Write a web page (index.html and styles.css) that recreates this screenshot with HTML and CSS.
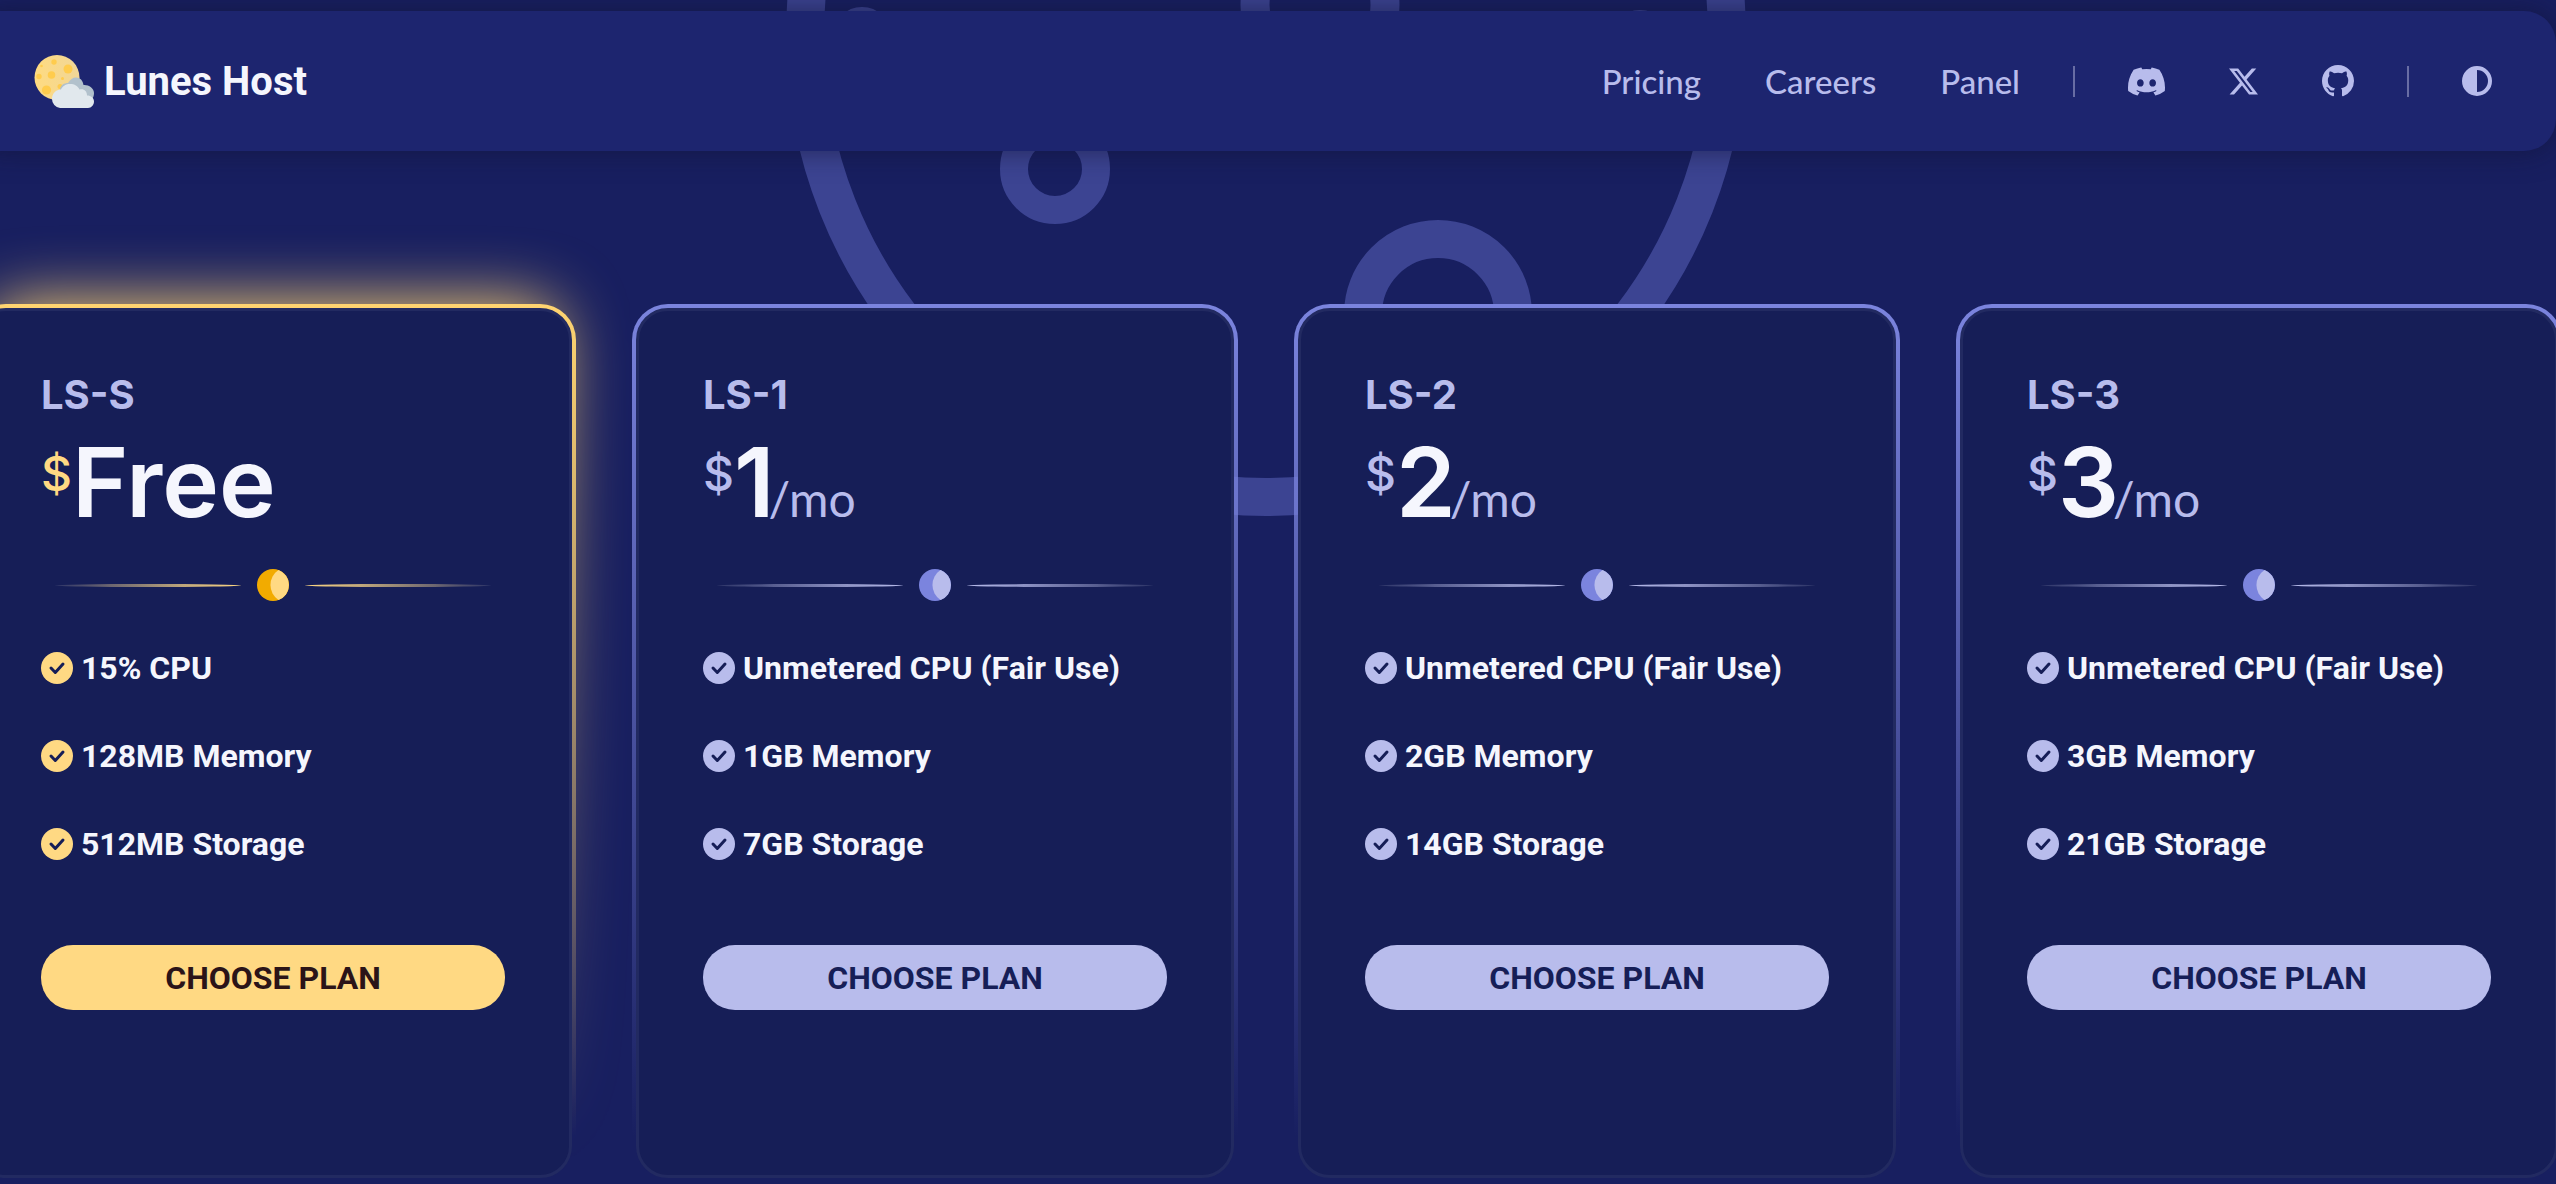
FILE: index.html
```html
<!DOCTYPE html>
<html lang="en">
	<head>
		<meta charset="UTF-8">
		<title>Lunes Host</title>
		<link rel="stylesheet" href="styles.css">
	</head>
	<body>
		<svg width="0" height="0" class="sprite">
			<symbol id="check" viewBox="0 0 32 32">
				<circle cx="16" cy="16" r="16"/>
				<path class="tick" d="M10 16l4.300 4.500L22 12"/>
			</symbol>
			<symbol id="moon" viewBox="0 0 32 32">
				<circle class="shade" cx="16" cy="16" r="16"/>
				<path d="M21.500 1A16 16 0 0 1 21.500 31A18 18 0 0 1 21.500 1"/>
			</symbol>
		</svg>
		<!-- big moon behind the cards -->
		<svg class="backdrop" width="960" height="517" viewBox="0 0 960 517">
			<circle cx="480" cy="36" r="461" stroke-width="38"/>
			<circle cx="269" cy="169" r="41" stroke-width="28"/>
			<circle cx="652" cy="314" r="75" stroke-width="38"/>
			<circle cx="534" cy="5" r="65" stroke-width="29"/>
			<circle cx="76" cy="36" r="20" stroke-width="18"/>
			<circle cx="854" cy="40" r="21" stroke-width="18"/>
		</svg>
		<header class="header">
			<a class="brand" href="#">
				<svg class="logo" width="60" height="53" viewBox="0 0 60 53">
					<defs>
						<linearGradient id="gold">
							<stop offset="0" stop-color="#ffdb80"/>
							<stop offset="1" stop-color="#f0d698"/>
						</linearGradient>
					</defs>
					<circle cx="23" cy="22.500" r="22.500" fill="url(#gold)"/>
					<g fill="#ffcc4d">
						<circle cx="20" cy="7" r="2.700"/>
						<circle cx="34" cy="14" r="4.500"/>
						<circle cx="17.500" cy="20" r="3.800"/>
						<circle cx="5" cy="21.500" r="2.700"/>
						<circle cx="7.500" cy="11" r="1.300"/>
						<circle cx="12.500" cy="35" r="4.600"/>
						<circle cx="28.500" cy="23.500" r="1.500"/>
						<circle cx="26" cy="31.500" r="2.500"/>
					</g>
					<path fill="#b2c1cc" d="M26 34c1-4 4-6 8-6 2-3.500 5-5.500 8-5.500 4 0 7 3 7.500 7.500 5-.5 10.500 3 10.500 8 0 3-1 4.500-2 6.500H30z"/>
					<path fill="#e1e8ed" d="M26 53a9 9 0 0 1-8-9c0-5.500 4-9.500 9-9.500 1.500-3.500 5-5.500 9-5.500 4.500 0 8 2 9.500 5.500 4.500-1 7.500 1.500 7.500 6 4 0 7 2.500 7 6s-2.500 6.500-6 6.500z"/>
				</svg>
				<span>Lunes Host</span>
			</a>
			<nav class="nav">
				<div class="links">
					<a href="#pricing">Pricing</a>
					<a href="#careers">Careers</a>
					<a href="#panel">Panel</a>
				</div>
				<span class="bar"></span>
				<div class="links">
					<a href="#" aria-label="Discord">
						<svg width="37" height="37" viewBox="0 0 16 16"><path d="M13.545 2.907a13.227 13.227 0 0 0-3.257-1.011.05.05 0 0 0-.052.025c-.141.25-.297.577-.406.833a12.19 12.19 0 0 0-3.658 0 8.258 8.258 0 0 0-.412-.833.051.051 0 0 0-.052-.025c-1.125.194-2.22.534-3.257 1.011a.041.041 0 0 0-.021.018C.356 6.024-.213 9.047.066 12.032c.001.014.01.028.021.037a13.276 13.276 0 0 0 3.995 2.02.05.05 0 0 0 .056-.019c.308-.42.582-.863.818-1.329a.05.05 0 0 0-.01-.059.051.051 0 0 0-.018-.011 8.875 8.875 0 0 1-1.248-.595.05.05 0 0 1-.02-.066.051.051 0 0 1 .015-.019c.084-.063.168-.129.248-.195a.05.05 0 0 1 .051-.007c2.619 1.196 5.454 1.196 8.041 0a.052.052 0 0 1 .053.007c.08.066.164.132.248.195a.051.051 0 0 1-.004.085 8.254 8.254 0 0 1-1.249.594.05.05 0 0 0-.03.03.052.052 0 0 0 .003.041c.24.465.515.909.817 1.329a.05.05 0 0 0 .056.019 13.235 13.235 0 0 0 4.001-2.02.049.049 0 0 0 .021-.037c.334-3.451-.559-6.449-2.366-9.106a.034.034 0 0 0-.02-.019Zm-8.198 7.307c-.789 0-1.438-.724-1.438-1.612 0-.889.637-1.613 1.438-1.613.807 0 1.45.73 1.438 1.613 0 .888-.637 1.612-1.438 1.612Zm5.316 0c-.788 0-1.438-.724-1.438-1.612 0-.889.637-1.613 1.438-1.613.807 0 1.451.73 1.438 1.613 0 .888-.631 1.612-1.438 1.612Z"/></svg>
					</a>
					<a href="#" aria-label="X">
						<svg width="29" height="29" viewBox="0 0 24 24"><path d="M18.901 1.153h3.68l-8.04 9.19L24 22.846h-7.406l-5.8-7.584-6.638 7.584H.474l8.6-9.83L0 1.154h7.594l5.243 6.932ZM17.61 20.644h2.039L6.486 3.24H4.298Z"/></svg>
					</a>
					<a href="#" aria-label="GitHub">
						<svg width="32" height="32" viewBox="0 0 16 16"><path d="M8 0C3.58 0 0 3.58 0 8c0 3.54 2.29 6.53 5.47 7.59.4.07.55-.17.55-.38 0-.19-.01-.82-.01-1.49-2.01.37-2.53-.49-2.69-.94-.09-.23-.48-.94-.82-1.13-.28-.15-.68-.52-.01-.53.63-.01 1.08.58 1.23.82.72 1.21 1.87.87 2.33.66.07-.52.28-.87.51-1.07-1.78-.2-3.64-.89-3.64-3.95 0-.87.31-1.59.82-2.15-.08-.2-.36-1.02.08-2.12 0 0 .67-.21 2.2.82.64-.18 1.32-.27 2-.27s1.36.09 2 .27c1.53-1.04 2.2-.82 2.2-.82.44 1.1.16 1.92.08 2.12.51.56.82 1.27.82 2.15 0 3.07-1.87 3.75-3.65 3.95.29.25.54.73.54 1.48 0 1.07-.01 1.93-.01 2.2 0 .21.15.46.55.38A8.01 8.01 0 0 0 16 8c0-4.42-3.58-8-8-8"/></svg>
					</a>
				</div>
				<span class="bar"></span>
				<button class="theme" type="button" aria-label="Switch theme">
					<svg width="30" height="30" viewBox="0 0 30 30"><path fill-rule="evenodd" d="M15 0a15 15 0 0 1 0 30a15 15 0 0 1 0-30zM15 4v22a11 11 0 0 0 0-22z"/></svg>
				</button>
			</nav>
		</header>
		<main class="plans">
			<section class="plan free">
				<div class="card">
					<h2>LS-S</h2>
					<p class="price"><sup>$</sup><strong>Free</strong></p>
					<div class="divider"><i class="left"></i><svg width="32" height="32"><use href="#moon"/></svg><i class="right"></i></div>
					<ul>
						<li><svg width="32" height="32"><use href="#check"/></svg>15% CPU</li>
						<li><svg width="32" height="32"><use href="#check"/></svg>128MB Memory</li>
						<li><svg width="32" height="32"><use href="#check"/></svg>512MB Storage</li>
					</ul>
					<button class="choose" type="button">CHOOSE PLAN</button>
				</div>
			</section>
			<section class="plan">
				<div class="card">
					<h2>LS-1</h2>
					<p class="price"><sup>$</sup><strong>1</strong><span>/mo</span></p>
					<div class="divider"><i class="left"></i><svg width="32" height="32"><use href="#moon"/></svg><i class="right"></i></div>
					<ul>
						<li><svg width="32" height="32"><use href="#check"/></svg>Unmetered CPU (Fair Use)</li>
						<li><svg width="32" height="32"><use href="#check"/></svg>1GB Memory</li>
						<li><svg width="32" height="32"><use href="#check"/></svg>7GB Storage</li>
					</ul>
					<button class="choose" type="button">CHOOSE PLAN</button>
				</div>
			</section>
			<section class="plan">
				<div class="card">
					<h2>LS-2</h2>
					<p class="price"><sup>$</sup><strong>2</strong><span>/mo</span></p>
					<div class="divider"><i class="left"></i><svg width="32" height="32"><use href="#moon"/></svg><i class="right"></i></div>
					<ul>
						<li><svg width="32" height="32"><use href="#check"/></svg>Unmetered CPU (Fair Use)</li>
						<li><svg width="32" height="32"><use href="#check"/></svg>2GB Memory</li>
						<li><svg width="32" height="32"><use href="#check"/></svg>14GB Storage</li>
					</ul>
					<button class="choose" type="button">CHOOSE PLAN</button>
				</div>
			</section>
			<section class="plan">
				<div class="card">
					<h2>LS-3</h2>
					<p class="price"><sup>$</sup><strong>3</strong><span>/mo</span></p>
					<div class="divider"><i class="left"></i><svg width="32" height="32"><use href="#moon"/></svg><i class="right"></i></div>
					<ul>
						<li><svg width="32" height="32"><use href="#check"/></svg>Unmetered CPU (Fair Use)</li>
						<li><svg width="32" height="32"><use href="#check"/></svg>3GB Memory</li>
						<li><svg width="32" height="32"><use href="#check"/></svg>21GB Storage</li>
					</ul>
					<button class="choose" type="button">CHOOSE PLAN</button>
				</div>
			</section>
		</main>
	</body>
</html>
```
FILE: styles.css
```css
* {
	margin: 0;
	padding: 0;
	box-sizing: border-box;
}
body {
	padding-top: 11px;
	background-color: #181f60;
	color: #f5f6fd;
	font-family: Roboto, sans-serif;
	overflow-x: hidden;
}
a {
	color: inherit;
	text-decoration: none;
}
svg {
	display: block;
	flex: none;
	fill: currentColor;
}
button {
	border: none;
	font-family: inherit;
	cursor: pointer;
}
.sprite {
	position: absolute;
}
.shade {
	fill: var(--deep);
}
.tick {
	fill: none;
	stroke: #161e57;
	stroke-width: 3px;
	stroke-linecap: round;
	stroke-linejoin: round;
}
.backdrop {
	position: absolute;
	top: 0;
	left: calc(50% - 492px);
	fill: none;
	stroke: #3c4492;
}
.header {
	position: relative;
	display: flex;
	align-items: center;
	justify-content: space-between;
	height: 140px;
	margin-left: -30px;
	padding: 0 64px;
	border-radius: 32px;
	background-color: #1d256f;
	box-shadow: 0 0 28px rgba(16, 18, 50, 0.6);
}
.brand {
	display: flex;
	align-items: center;
	gap: 10px;
	font-size: 40px;
	font-weight: 700;
}
.nav, .links {
	display: flex;
	align-items: center;
}
.nav {
	gap: 53px;
	color: #b8bcec;
	font-family: Lato, sans-serif;
	font-size: 33px;
	font-weight: 500;
}
.links {
	gap: 64px;
}
.bar {
	width: 2px;
	height: 31px;
	background-color: #686da4;
}
.theme {
	background: none;
	color: inherit;
}
.plans {
	display: grid;
	grid-template-columns: repeat(4, 1fr);
	gap: 56px;
	margin: 153px -6px 0 -30px;
}
.plan {
	--main: #b8bcec;
	--deep: #7b84de;
	--ink: #161e57;
	position: relative;
	padding: 4px 4px 3px;
	border-radius: 36px;
	background-image: linear-gradient(var(--deep), transparent 95%);
}
.free {
	--main: #ffd983;
	--deep: #f2ab00;
	--ink: #2b1418;
	background-image: linear-gradient(#ffd470, transparent 95%);
}
.free::before {
	content: "";
	position: absolute;
	inset: -2px 16px 0;
	border-radius: 36px;
	background-image: linear-gradient(#ffd470, transparent 95%);
	filter: blur(32px);
	z-index: -1;
}
.card {
	padding: 60px 64px 165px;
	border: 3px solid #222a61;
	border-radius: 32px;
	background-color: #161e57;
}
.card h2 {
	color: #b8bcec;
	font: 700 40px/48px Inter, sans-serif;
}
.price {
	display: flex;
	align-items: baseline;
	height: 96px;
	margin-top: 15px;
	color: var(--main);
	font-family: Lato, sans-serif;
	font-size: 48px;
	line-height: 96px;
}
.price sup {
	align-self: flex-start;
	font-family: Inter, sans-serif;
	font-size: 48px;
	font-weight: 500;
	line-height: 80px;
}
.price strong {
	color: #f5f6fd;
	font-family: Inter, sans-serif;
	font-size: 96px;
	font-weight: 600;
}
.price span {
	margin-left: -6px;
}
.divider {
	display: flex;
	align-items: center;
	gap: 16px;
	margin: 39px 14px 51px;
	color: var(--main);
}
.divider i {
	flex: 1;
	height: 3px;
	border-radius: 50%;
}
.divider .left {
	background-image: linear-gradient(to left, var(--main), rgba(255, 255, 255, 0.1));
}
.divider .right {
	background-image: linear-gradient(to right, var(--main), rgba(255, 255, 255, 0.1));
}
.card ul {
	display: grid;
	gap: 56px;
	list-style: none;
}
.card li {
	display: flex;
	align-items: center;
	gap: 8px;
	font-size: 32px;
	font-weight: 700;
	line-height: 32px;
}
.card li svg {
	color: var(--main);
}
.choose {
	display: block;
	width: 100%;
	height: 65px;
	margin-top: 85px;
	border-radius: 32px;
	background-color: var(--main);
	color: var(--ink);
	font-size: 32px;
	font-weight: 700;
}
```
